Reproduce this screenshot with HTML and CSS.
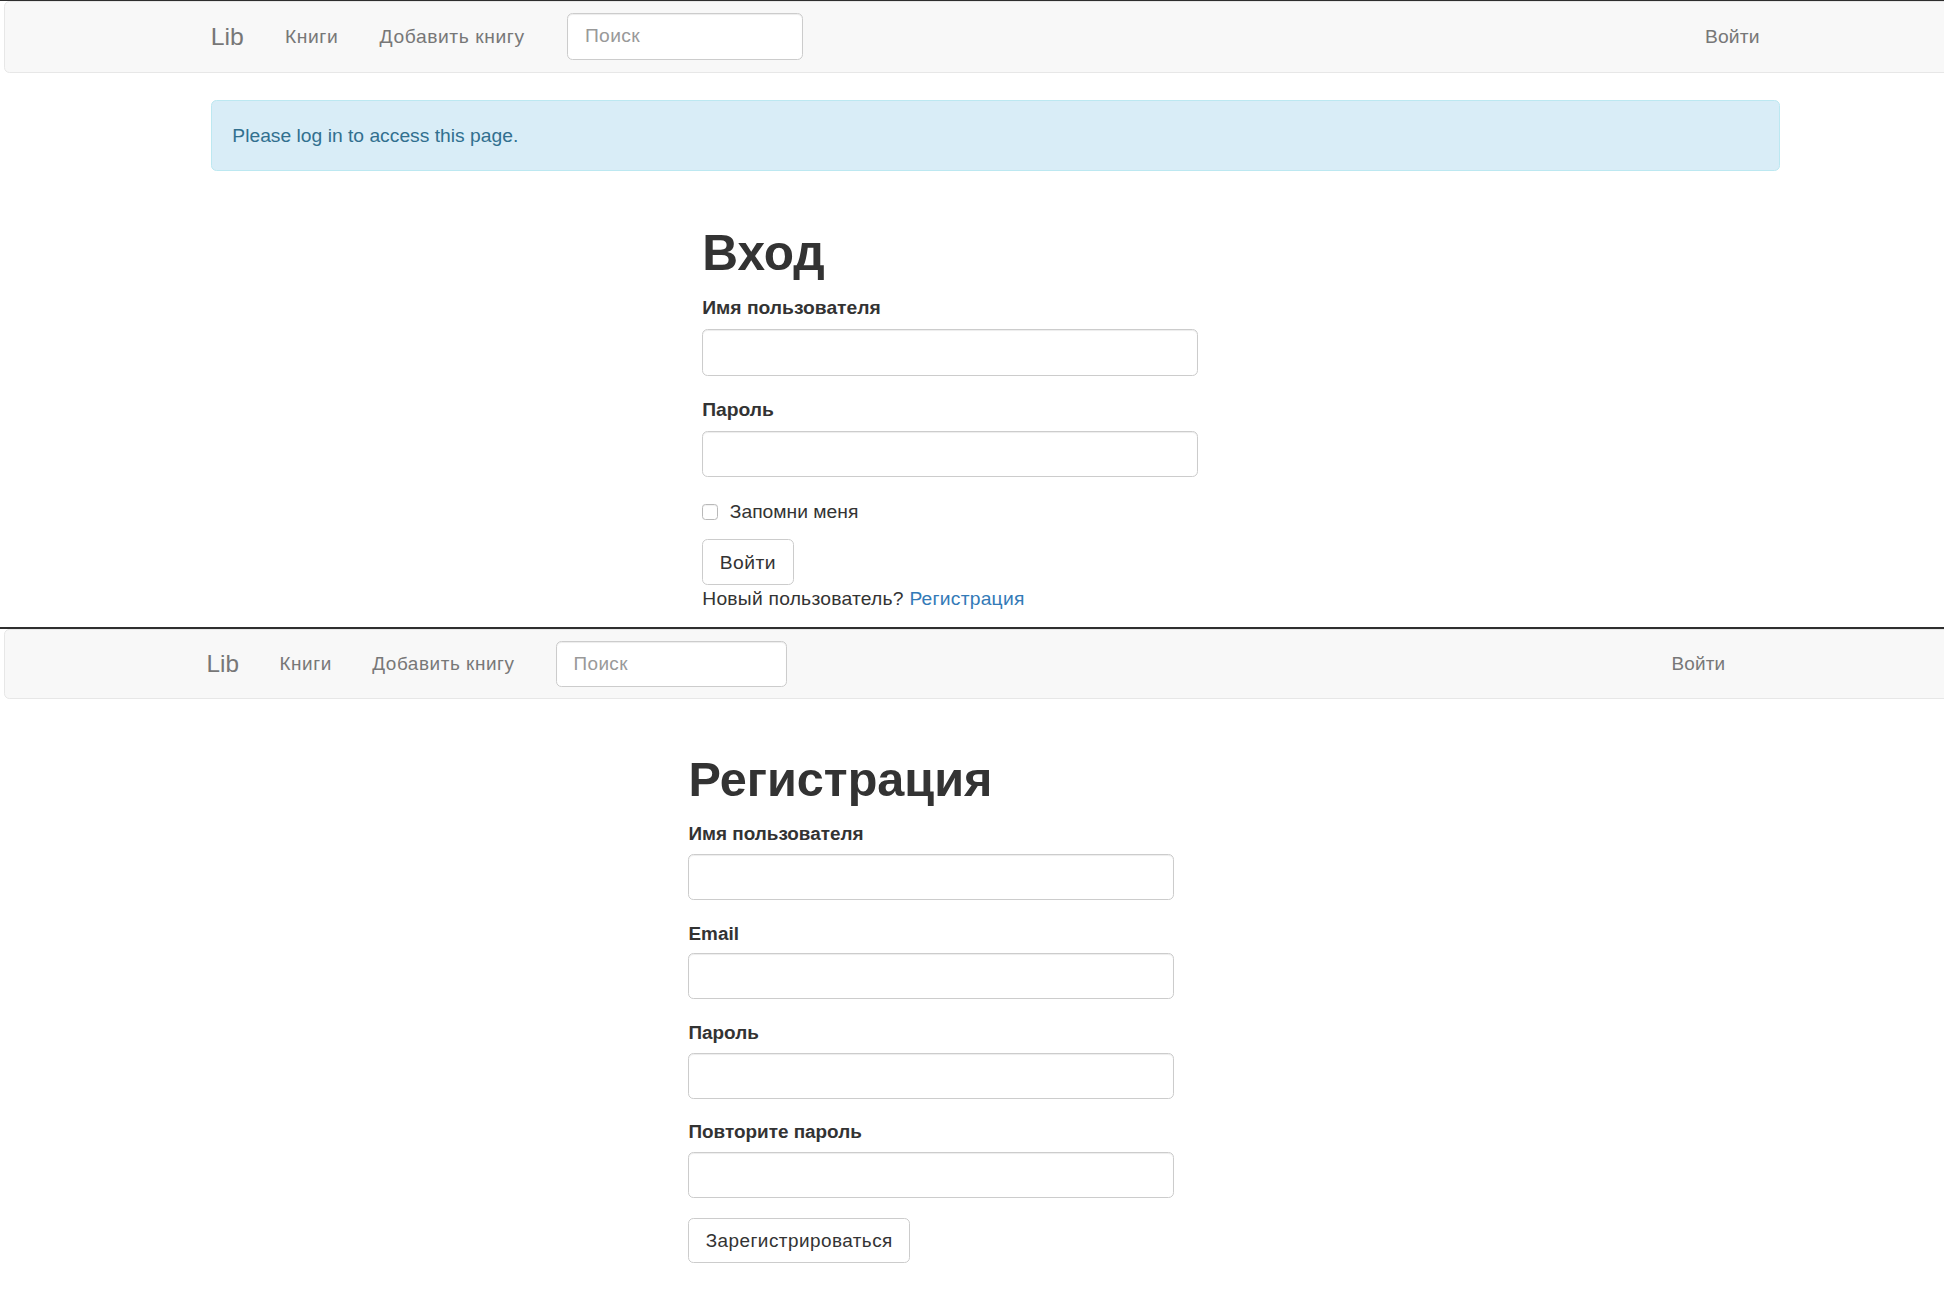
FILE: index.html
```html
<!DOCTYPE html>
<html lang="ru">
<head>
<meta charset="utf-8">
<title>Lib</title>
<link rel="stylesheet" href="styles.css">
</head>
<body>
<section class="shot shot-login">
  <div class="edge edge-thin"></div>
  <nav class="navbar">
    <div class="nav-inner">
      <a class="brand" href="#">Lib</a>
      <ul class="nav">
        <li><a href="#">Книги</a></li>
        <li><a href="#">Добавить книгу</a></li>
      </ul>
      <form class="nav-search"><input class="form-control search-input" type="text" placeholder="Поиск"></form>
      <ul class="nav nav-right"><li><a href="#">Войти</a></li></ul>
    </div>
  </nav>
  <div class="container">
    <div class="alert">Please log in to access this page.</div>
    <div class="form-col">
      <h1>Вход</h1>
      <form class="auth-form">
        <div class="form-group"><label>Имя пользователя</label><input class="form-control" type="text"></div>
        <div class="form-group"><label>Пароль</label><input class="form-control" type="password"></div>
        <div class="checkbox"><label><input type="checkbox">Запомни меня</label></div>
        <button class="btn" type="button">Войти</button>
      </form>
      <p class="hint">Новый пользователь? <a href="#">Регистрация</a></p>
    </div>
  </div>
</section>
<section class="shot shot-register">
  <div class="edge edge-thick"></div>
  <nav class="navbar">
    <div class="nav-inner">
      <a class="brand" href="#">Lib</a>
      <ul class="nav">
        <li><a href="#">Книги</a></li>
        <li><a href="#">Добавить книгу</a></li>
      </ul>
      <form class="nav-search"><input class="form-control search-input" type="text" placeholder="Поиск"></form>
      <ul class="nav nav-right"><li><a href="#">Войти</a></li></ul>
    </div>
  </nav>
  <div class="container">
    <div class="form-col">
      <h1>Регистрация</h1>
      <form class="auth-form">
        <div class="form-group"><label>Имя пользователя</label><input class="form-control" type="text"></div>
        <div class="form-group"><label>Email</label><input class="form-control" type="text"></div>
        <div class="form-group"><label>Пароль</label><input class="form-control" type="password"></div>
        <div class="form-group"><label>Повторите пароль</label><input class="form-control" type="password"></div>
        <button class="btn" type="button">Зарегистрироваться</button>
      </form>
    </div>
  </div>
</section>
</body>
</html>
```

FILE: styles.css
```css
* { box-sizing: border-box; }
html, body { margin: 0; padding: 0; background: #fff; }
body {
  overflow: hidden;
  font-family: "Liberation Sans", Arial, Helvetica, sans-serif;
  color: #333;
}
.shot {
  --u: 1.377px;
  font-size: calc(14 * var(--u));
  line-height: calc(20 * var(--u));
  overflow: hidden;
}
.shot-login { height: 627px; }
.shot-register { --u: 1.35px; }

.edge { background: #2e2e2e; }
.edge-thin { height: 1px; }
.edge-thick { height: 2px; }

.navbar {
  margin: 0 0 calc(20 * var(--u)) 4px;
  width: calc(100% + 20px);
  height: calc(52 * var(--u));
  background: #f8f8f8;
  border: 1px solid #e7e7e7;
  border-radius: calc(4 * var(--u));
}
.nav-inner {
  display: flex;
  align-items: flex-start;
  padding-left: calc(138 * var(--u) - 5px);
  width: calc(1293 * var(--u) - 5px);
}
.brand {
  display: block;
  padding: calc(15 * var(--u));
  font-size: calc(18 * var(--u));
  line-height: calc(20 * var(--u));
  color: #777;
  text-decoration: none;
}
.nav {
  list-style: none;
  margin: 0;
  padding: 0;
  display: flex;
}
.nav a {
  display: block;
  padding: calc(15 * var(--u));
  line-height: calc(20 * var(--u));
  letter-spacing: 0.03em;
  color: #777;
  text-decoration: none;
}
.nav-right { margin-left: auto; }
.nav-right a { letter-spacing: 0.01em; }
.nav-search { margin: calc(8 * var(--u)) 0 0 calc(16 * var(--u)); }

.form-control {
  display: block;
  width: 100%;
  height: calc(34 * var(--u));
  padding: calc(6 * var(--u)) calc(12 * var(--u));
  font-family: inherit;
  font-size: calc(14 * var(--u));
  line-height: calc(20 * var(--u));
  color: #555;
  background: #fff;
  border: 1px solid #ccc;
  border-radius: calc(4 * var(--u));
  box-shadow: inset 0 1px 1px rgba(0, 0, 0, .075);
  outline: none;
}
.form-control::placeholder { color: #999; letter-spacing: 0.02em; }
.nav-search .search-input { width: calc(171 * var(--u)); }

.container {
  margin-left: calc(153 * var(--u));
  width: calc(1140 * var(--u));
}
.alert {
  padding: calc(15 * var(--u));
  margin-bottom: calc(20 * var(--u));
  border: 1px solid #bce8f1;
  border-radius: calc(4 * var(--u));
  background: #d9edf7;
  color: #31708f;
}
.form-col {
  display: flow-root;
  margin-left: calc(357 * var(--u));
  width: calc(360 * var(--u));
}
h1 {
  font-size: calc(36 * var(--u));
  font-weight: 700;
  line-height: 1.1;
  margin: calc(20 * var(--u)) 0 calc(10 * var(--u));
}
.form-group { margin-bottom: calc(15 * var(--u)); }
.shot-register .form-group { margin-bottom: calc(15 * var(--u) - 0.5px); }
.form-group label {
  display: inline-block;
  margin-bottom: calc(5 * var(--u));
  font-weight: 700;
}
.checkbox { margin: calc(10 * var(--u)) 0; }
.checkbox label {
  display: flex;
  align-items: center;
  min-height: calc(20 * var(--u));
}
.checkbox input {
  appearance: none;
  -webkit-appearance: none;
  flex: none;
  width: calc(11.5 * var(--u));
  height: calc(11.5 * var(--u));
  margin: 0 calc(8.5 * var(--u)) 0 0;
  background: #fff;
  border: 1px solid #b9b9b9;
  border-radius: calc(2.5 * var(--u));
  box-shadow: inset 0 1px 1px rgba(0, 0, 0, .06);
}
.btn {
  display: block;
  padding: calc(6 * var(--u)) calc(12 * var(--u));
  font-family: inherit;
  font-size: calc(14 * var(--u));
  line-height: calc(20 * var(--u));
  letter-spacing: 0.025em;
  color: #333;
  background: #fff;
  border: 1px solid #ccc;
  border-radius: calc(4 * var(--u));
}
p { margin: 0 0 calc(10 * var(--u)); }
.hint { letter-spacing: 0.012em; }
a { color: #337ab7; text-decoration: none; }
```
